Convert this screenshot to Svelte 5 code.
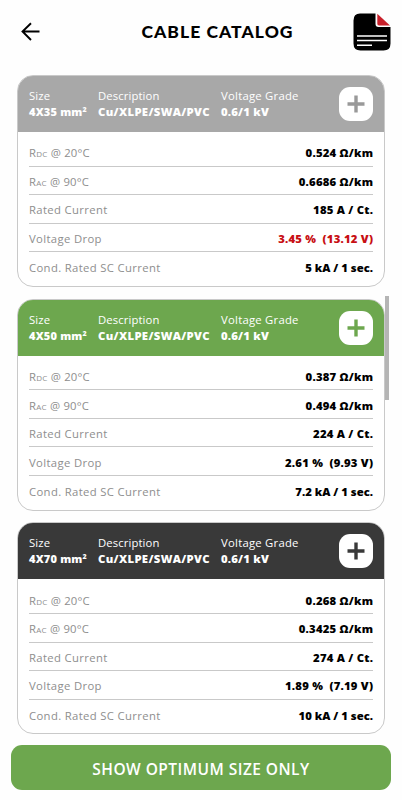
<script>
  const cards = [
    { tone: 'grey', color: '#999', size: '4X35', values: ['0.524 Ω/km', '0.6686 Ω/km', '185 A / Ct.', '3.45 %  (13.12 V)', '5 kA / 1 sec.'], alert: true },
    { tone: 'green', color: '#6da74e', size: '4X50', values: ['0.387 Ω/km', '0.494 Ω/km', '224 A / Ct.', '2.61 %  (9.93 V)', '7.2 kA / 1 sec.'] },
    { tone: 'dark', color: '#393939', size: '4X70', values: ['0.268 Ω/km', '0.3425 Ω/km', '274 A / Ct.', '1.89 %  (7.19 V)', '10 kA / 1 sec.'] }
  ];
  const labels = ['dc', 'ac', 'Rated Current', 'Voltage Drop', 'Cond. Rated SC Current'];
</script>

<div class="screen">
  <header>
    <button class="back" aria-label="Back">
      <svg width="20" height="20" viewBox="0 0 20 20" fill="none" stroke="#000" stroke-width="1.9"><path d="M11 1.2 2.5 9.500l8.500 8.500M2.500 9.500H19.500" /></svg>
    </button>
    <h1>CABLE CATALOG</h1>
    <svg class="doc" width="38" height="38" viewBox="0 0 38 38">
      <path d="M7 .5h15.5V11q0 3 3 3H37.5v16.500q0 7-7 7H7.500q-7 0-7-7V7.500q0-7 6.500-7Z" fill="#000" />
      <path d="M24.300 .700 37 12.500H26q-1.700 0-1.700-1.700Z" fill="#c9202b" />
      <path d="M4 23h30M4 27.500h30M4 32.200h15" stroke="#fff" stroke-width="1.500" />
    </svg>
  </header>

  <main>
    {#each cards as card}
      <section class={card.tone}>
        <div class="head">
          <div class="col size"><span>Size</span><b>{card.size} mm<sup>2</sup></b></div>
          <div class="col desc"><span>Description</span><b>Cu/XLPE/SWA/PVC</b></div>
          <div class="col grade"><span>Voltage Grade</span><b>0.6/1 kV</b></div>
          <button class="add" aria-label="Add">
            <svg width="34" height="34" viewBox="0 0 34 34" fill="none" stroke={card.color} stroke-width="3.4"><path d="M17 8.500v17M8.500 17h17" /></svg>
          </button>
        </div>
        <div class="rows">
          {#each labels as label, i}
            <div class="row">
              <span class="label l{i}">{#if i < 2}R<small>{label.toUpperCase()}</small> @ {i ? '90' : '20'}°C{:else}{label}{/if}</span>
              <span class="value v{i}" class:alert={card.alert && i === 3}>{card.values[i]}</span>
            </div>
          {/each}
        </div>
      </section>
    {/each}
    <div class="thumb"></div>
  </main>

  <button class="cta">SHOW OPTIMUM SIZE ONLY</button>
</div>

<style>
  :global(body) { margin: 0; background: #fefefe; }
  .screen {
    position: relative; box-sizing: border-box; width: 402px; height: 800px; overflow: hidden;
    display: flex; flex-direction: column; background: #fefefe; color: #000;
    font-family: "Open Sans", "Noto Sans", sans-serif;
  }
  button { border: 0; padding: 0; background: none; font-family: inherit; }
  svg { display: block; }
  header { display: flex; align-items: center; height: 63px; padding: 0 11px 0 20px; flex: none; }
  .back { width: 38px; }
  h1 {
    flex: 1; margin: 1px 0 0; padding-left: 24px; text-align: center; white-space: nowrap;
    font: 900 17.500px/24px Lato, sans-serif; letter-spacing: 1.05px;
  }
  main { position: relative; display: flex; flex-direction: column; gap: 11.700px; padding: 12px 17px 0; height: 671px; box-sizing: border-box; flex: none; }
  section {
    box-sizing: border-box; width: 368px; height: 212px; overflow: hidden; flex: none;
    border: 1px solid #c9c9c9; border-radius: 16px; background: #fff;
  }
  .head { display: flex; align-items: flex-start; box-sizing: border-box; height: 57px; margin: -1px -1px 0; padding: 12px 12px 0; color: #fff; }
  .grey .head { background: #a8a8a8; }
  .green .head { background: #6da74e; }
  .dark .head { background: #393939; }
  .col { display: flex; flex-direction: column; white-space: nowrap; }
  .col span { font-size: 11.300px; line-height: 17px; letter-spacing: 0.1px; }
  .grade span { letter-spacing: 0.25px; }
  .col b { font-size: 11px; line-height: 16px; font-weight: 800; letter-spacing: 0.2px; }
  .desc b { font-size: 11.300px; letter-spacing: 0.35px; }
  .grade b { font-size: 11.300px; letter-spacing: 0.2px; }
  .size { width: 69px; }
  .desc { width: 123px; }
  .grade { flex: 1; }
  sup { font-size: 7px; line-height: 0; vertical-align: 4px; }
  .add { width: 34px; height: 34px; border-radius: 11px; background: #fff; }
  .rows { padding: 6px 11px 0; }
  .row { display: flex; justify-content: space-between; align-items: center; box-sizing: border-box; height: 28.6px; padding-top: 2px; border-bottom: 1px solid #c9c9c9; white-space: pre; font-size: 11.300px; }
  .row:last-child { border-bottom: 0; }
  .label { color: #8e8e8e; font-weight: 500; letter-spacing: 0.35px; }
  .l0, .l1 { letter-spacing: 0.22px; }
  small { font-size: 8px; }
  .value { font-weight: 800; letter-spacing: 0.22px; margin-right: -0.2px; }
  .v4 { letter-spacing: 0; margin-right: 0; }
  .value.alert { color: #c80f14; }
  .thumb { position: absolute; left: 385px; top: 233px; width: 4px; height: 104px; background: #b5b5b5; }
  .cta {
    flex: none; width: 380px; height: 45px; margin: 11px 11px 0; border-radius: 11px; background: #6da74e; color: #fff;
    font: 600 15.5px/24px "Open Sans", sans-serif; letter-spacing: 0.46px; padding-top: 3px;
  }
</style>
